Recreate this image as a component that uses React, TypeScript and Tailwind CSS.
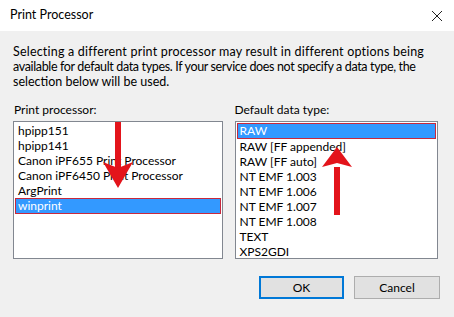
import React from "react";

const processors = [
  "hpipp151",
  "hpipp141",
  "Canon iPF655 Print Processor",
  "Canon iPF6450 Print Processor",
  "ArgPrint",
  "winprint",
];

const dataTypes = [
  "RAW",
  "RAW [FF appended]",
  "RAW [FF auto]",
  "NT EMF 1.003",
  "NT EMF 1.006",
  "NT EMF 1.007",
  "NT EMF 1.008",
  "TEXT",
  "XPS2GDI",
];

function ListBox({ items, selected }: { items: string[]; selected: string }) {
  return (
    <div className="h-[138px] border border-[#828790] bg-white px-px pt-px">
      {items.map((item) =>
        item === selected ? (
          <div
            key={item}
            className="h-[16px] border border-[#c8283c] bg-[#3399ff] pl-[2px] leading-[14px] text-white"
          >
            {item}
          </div>
        ) : (
          <div key={item} className="h-[15px] pl-[3px] leading-[15px] text-black">
            {item}
          </div>
        )
      )}
    </div>
  );
}

function Arrow({ down }: { down: boolean }) {
  return (
    <svg width="32" height="68" viewBox="0 0 32 68" className="block">
      {down ? (
        <>
          <rect x="13" y="0" width="6" height="46" fill="#e3141b" />
          <path d="M1 40 L16 66 L31 40 L16 46 Z" fill="#e3141b" />
        </>
      ) : (
        <>
          <rect x="13" y="20" width="6" height="48" fill="#e3141b" />
          <path d="M1 20 L16 0 L31 20 L16 16 Z" fill="#e3141b" />
        </>
      )}
    </svg>
  );
}

export default function App() {
  return (
    <div
      className="relative w-[454px] h-[317px] overflow-hidden bg-[#f0f0f0] text-[12px] text-black"
      style={{ fontFamily: 'Lato, "Noto Sans", sans-serif' }}
    >
      <div className="flex h-[31px] items-center justify-between bg-white pl-[10px] pr-[8px]">
        <span className="text-[12.5px]">Print Processor</span>
        <svg width="12" height="12" viewBox="0 0 12 12" className="mr-[3px]">
          <path d="M1 1 L11 11 M11 1 L1 11" stroke="#222" strokeWidth="1" />
        </svg>
      </div>

      <div className="pl-[13px] pt-[13px] leading-[15px] whitespace-nowrap text-[12.5px]">
        <div className="tracking-[0.2px]">Selecting a different print processor may result in different options being</div>
        <div className="tracking-[-0.35px]">available for default data types. If your service does not specify a data type, the</div>
        <div>selection below will be used.</div>
      </div>

      <div className="mt-[13px] flex gap-[12px] pl-[13px] pr-[16px]">
        <div className="w-[210px]">
          <div className="mb-[4px] h-[15px] pl-px leading-[15px]">Print processor:</div>
          <ListBox items={processors} selected="winprint" />
        </div>
        <div className="w-[204px]">
          <div className="mb-[4px] h-[15px] leading-[15px]">Default data type:</div>
          <ListBox items={dataTypes} selected="RAW" />
        </div>
      </div>

      <div className="mt-[17px] flex justify-end gap-[10px] pr-[14px]">
        <button className="h-[23px] w-[85px] border-2 border-[#0078d7] bg-[#e1e1e1]">
          OK
        </button>
        <button className="h-[23px] w-[86px] border border-[#adadad] bg-[#e1e1e1]">
          Cancel
        </button>
      </div>

      <div className="absolute left-[102px] top-[122px]">
        <Arrow down />
      </div>
      <div className="absolute left-[321px] top-[147px]">
        <Arrow down={false} />
      </div>
    </div>
  );
}
